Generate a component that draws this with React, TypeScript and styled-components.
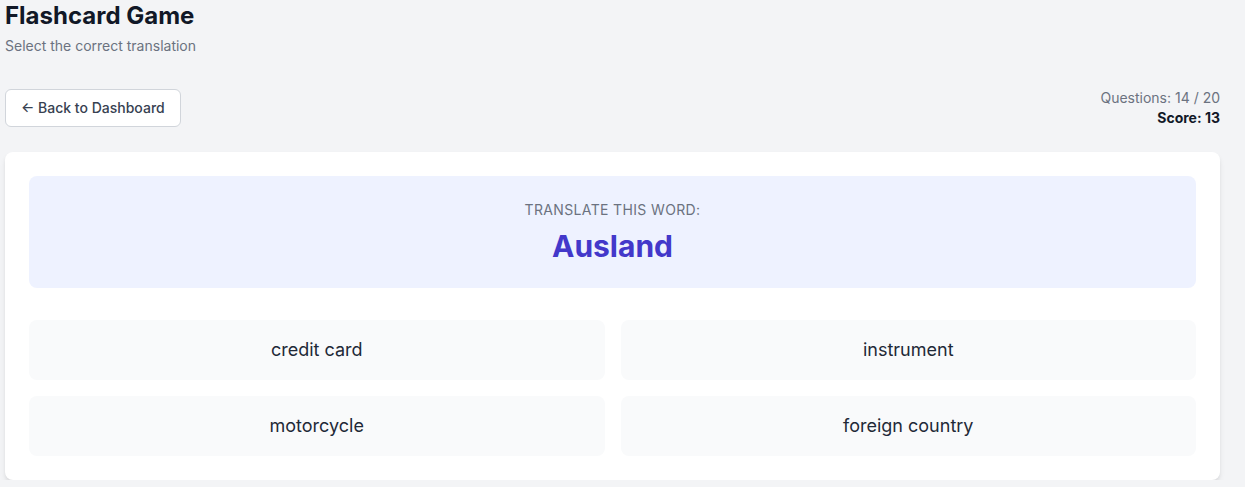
import React from "react";
import styled, { createGlobalStyle } from "styled-components";

const GlobalStyle = createGlobalStyle`
  * { box-sizing: border-box; }
  body {
    margin: 0;
    background-color: #f3f4f6;
    font-family: Inter, "Liberation Sans", sans-serif;
    color: #111827;
  }
`;

const options = ["credit card", "instrument", "motorcycle", "foreign country"];

export default function App() {
  return (
    <>
      <GlobalStyle />
      <Page>
        <Header>
          <Title>Flashcard Game</Title>
          <Subtitle>Select the correct translation</Subtitle>
        </Header>
        <Toolbar>
          <BackButton>← Back to Dashboard</BackButton>
          <Stats>
            <Questions>Questions: 14 / 20</Questions>
            <Score>Score: 13</Score>
          </Stats>
        </Toolbar>
        <Card>
          <Prompt>
            <PromptLabel>Translate this word:</PromptLabel>
            <Word>Ausland</Word>
          </Prompt>
          <Options>
            {options.map((o) => (
              <Option key={o}>{o}</Option>
            ))}
          </Options>
        </Card>
      </Page>
    </>
  );
}

const Page = styled.div`
  padding: 0 25px 0 5px;
`;

const Header = styled.header`
  margin-bottom: 32px;
`;

const Title = styled.h1`
  margin: 0;
  font-size: 24px;
  line-height: 32px;
  font-weight: 700;
  color: #111827;
`;

const Subtitle = styled.p`
  margin: 4px 0 0;
  font-size: 14px;
  line-height: 20px;
  color: #6b7280;
`;

const Toolbar = styled.div`
  display: flex;
  justify-content: space-between;
  align-items: center;
  margin-bottom: 24px;
`;

const BackButton = styled.button`
  height: 38px;
  padding: 0 15px;
  background: #ffffff;
  border: 1px solid #d1d5db;
  border-radius: 6px;
  font-family: inherit;
  font-size: 14px;
  line-height: 20px;
  font-weight: 500;
  color: #374151;
  cursor: pointer;
`;

const Stats = styled.div`
  text-align: right;
  font-size: 14px;
  line-height: 20px;
`;

const Questions = styled.div`
  color: #6b7280;
`;

const Score = styled.div`
  font-weight: 700;
  color: #111827;
`;

const Card = styled.section`
  background: #ffffff;
  border-radius: 8px;
  padding: 24px;
  box-shadow: 0 4px 6px -1px rgba(0, 0, 0, 0.1), 0 2px 4px -1px rgba(0, 0, 0, 0.06);
`;

const Prompt = styled.div`
  background: #eef2ff;
  border-radius: 8px;
  padding: 24px;
  text-align: center;
  margin-bottom: 32px;
`;

const PromptLabel = styled.div`
  font-size: 14px;
  line-height: 20px;
  text-transform: uppercase;
  letter-spacing: 0.025em;
  color: #6b7280;
  margin-bottom: 8px;
`;

const Word = styled.div`
  font-size: 30px;
  line-height: 36px;
  font-weight: 700;
  color: #4338ca;
`;

const Options = styled.div`
  display: grid;
  grid-template-columns: 1fr 1fr;
  gap: 16px;
`;

const Option = styled.button`
  padding: 16px;
  border: none;
  border-radius: 8px;
  background: #f9fafb;
  font-family: inherit;
  font-size: 18px;
  line-height: 28px;
  color: #1f2937;
  cursor: pointer;
`;
